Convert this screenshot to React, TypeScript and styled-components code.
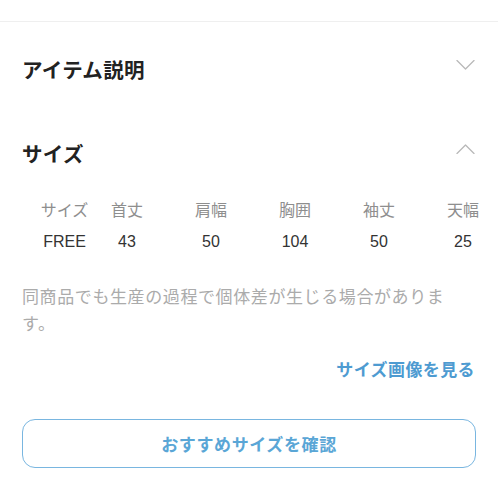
import styled, { createGlobalStyle } from "styled-components";

const GlobalStyle = createGlobalStyle`
	html, body {
		margin: 0;
		padding: 0;
		background: #ffffff;
		overflow: hidden;
	}
	body {
		font-family: "Liberation Sans", "Noto Sans CJK JP", sans-serif;
		color: #222222;
	}
`;

const Wrapper = styled.div`
	width: 498px;
	height: 498px;
	padding-top: 21px;
	box-sizing: border-box;
`;

const Divider = styled.div`
	height: 1px;
	background-color: #efefef;
`;

const Content = styled.div`
	padding: 0 22px;
`;

const SectionHeader = styled.div<{ $top: number }>`
	display: flex;
	align-items: center;
	justify-content: space-between;
	height: 48px;
	margin-top: ${({ $top }) => $top}px;
`;

const SectionTitle = styled.div`
	font-size: 20.5px;
	font-weight: bold;
	letter-spacing: 0.3px;
	color: #222222;
`;

const ChevronIcon = styled.svg`
	width: 19px;
	height: 10px;
	margin: 0 1px 9px 0;
`;

const SizeTable = styled.div`
	display: grid;
	grid-template-columns: 63px repeat(5, 84px);
	margin-top: 15px;
`;

const Cell = styled.div<{ $head?: boolean; $first?: boolean }>`
	display: flex;
	align-items: center;
	justify-content: center;
	height: 33px;
	padding-left: ${({ $first }) => ($first ? "22px" : "0")};
	font-size: 16px;
	white-space: nowrap;
	color: ${({ $head }) => ($head ? "#8e8e8e" : "#333333")};
`;

const Note = styled.p`
	margin: 26px 16px 0 0;
	font-size: 17px;
	line-height: 27px;
	letter-spacing: 0.6px;
	color: #ababab;
`;

const LinkRow = styled.div`
	display: flex;
	justify-content: flex-end;
	margin-top: 21px;
	padding-right: 1px;
`;

const SizeImageLink = styled.a`
	font-size: 17px;
	line-height: 24px;
	font-weight: bold;
	letter-spacing: 0.4px;
	color: #4e9bd1;
	text-decoration: none;
	cursor: pointer;
`;

const RecommendButton = styled.button`
	display: flex;
	align-items: center;
	justify-content: center;
	width: 100%;
	height: 49px;
	margin-top: 36px;
	border: 1px solid #79b6e0;
	border-radius: 13px;
	background: #ffffff;
	font-family: inherit;
	font-size: 17px;
	font-weight: bold;
	letter-spacing: 0.6px;
	color: #5aa6d6;
	cursor: pointer;
`;

const Chevron = ({ up }: { up?: boolean }) => (
	<ChevronIcon viewBox="0 0 19 10" fill="none">
		<path
			d={up ? "M1 9.5 L9.5 1 L18 9.5" : "M1 0.5 L9.5 9 L18 0.5"}
			stroke="#b9b9b9"
			strokeWidth="1.3"
			strokeLinecap="round"
			strokeLinejoin="round"
		/>
	</ChevronIcon>
);

const headers = ["サイズ", "首丈", "肩幅", "胸囲", "袖丈", "天幅"];
const values = ["FREE", "43", "50", "104", "50", "25"];

const App = () => {
	return (
		<Wrapper>
			<GlobalStyle />
			<Divider />
			<Content>
				<SectionHeader $top={23}>
					<SectionTitle>アイテム説明</SectionTitle>
					<Chevron />
				</SectionHeader>
				<SectionHeader $top={36}>
					<SectionTitle>サイズ</SectionTitle>
					<Chevron up />
				</SectionHeader>
				<SizeTable>
					{headers.map((h, i) => (
						<Cell key={`h-${i}`} $head $first={i === 0}>
							{h}
						</Cell>
					))}
					{values.map((v, i) => (
						<Cell key={`v-${i}`} $first={i === 0}>
							{v}
						</Cell>
					))}
				</SizeTable>
				<Note>同商品でも生産の過程で個体差が生じる場合があります。</Note>
				<LinkRow>
					<SizeImageLink>サイズ画像を見る</SizeImageLink>
				</LinkRow>
				<RecommendButton>おすすめサイズを確認</RecommendButton>
			</Content>
		</Wrapper>
	);
};

export default App;
